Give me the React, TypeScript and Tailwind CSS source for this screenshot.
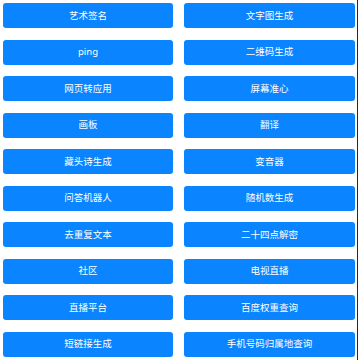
import React from "react";

const items = [
  "艺术签名", "文字图生成",
  "ping", "二维码生成",
  "网页转应用", "屏幕准心",
  "画板", "翻译",
  "藏头诗生成", "变音器",
  "问答机器人", "随机数生成",
  "去重复文本", "二十四点解密",
  "社区", "电视直播",
  "直播平台", "百度权重查询",
  "短链接生成", "手机号码归属地查询",
];

export default function App() {
  return (
    <div
      className="w-[358px] h-[360px] border-r border-[#2a2a2a] bg-white overflow-hidden"
      style={{ fontFamily: '"Noto Sans", "Noto Sans CJK SC", sans-serif' }}
    >
      <div className="grid grid-cols-[170px_171px] gap-x-[11px] gap-y-[11.5px] pl-[3px] pt-[3px]">
        {items.map((t) => (
          <div
            key={t}
            className="h-[25px] rounded-[3px] bg-[#0a84ff] flex items-center justify-center text-white text-[9.5px] leading-none"
          >
            {t}
          </div>
        ))}
      </div>
    </div>
  );
}
